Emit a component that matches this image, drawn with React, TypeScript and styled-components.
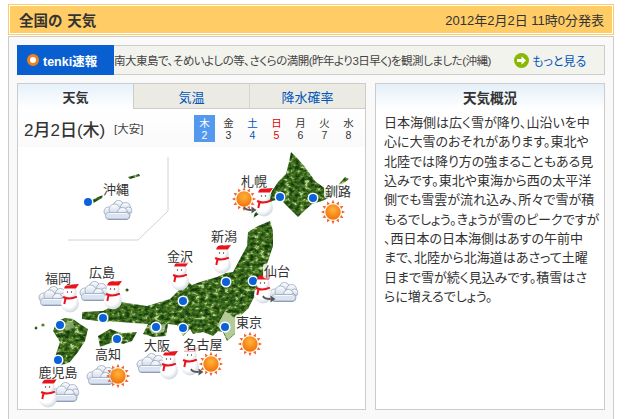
import styled, { createGlobalStyle } from 'styled-components';

const GlobalStyle = createGlobalStyle`
  html, body {
    margin: 0;
    padding: 0;
    height: 419px;
    overflow: hidden;
    background: #fff;
    font-family: "Liberation Sans", "Noto Sans CJK JP", sans-serif;
    font-feature-settings: "palt";
    color: #333;
  }
`;

const Page = styled.div`
  width: 606px;
  padding: 4px 0 0 8px;
`;

const TitleBar = styled.header`
  box-sizing: border-box;
  height: 31px;
  margin-bottom: 1px;
  padding: 0 9px 0 10px;
  display: flex;
  align-items: center;
  justify-content: space-between;
  background: #ffcc66;
  border: 1px solid #ffcc66;
  box-shadow: inset 0 0 0 1px #fff;
`;

const Title = styled.h1`
  margin: 0;
  font-size: 14.5px;
  font-weight: 700;
  color: #333;
  word-spacing: 1px;
`;

const Published = styled.span`
  font-size: 13px;
  color: #333;
`;

const Shell = styled.main`
  box-sizing: border-box;
  height: 400px;
  padding: 8px;
  background: #f9f9f9;
  border: 1px solid #ccc;
`;

const NewsBar = styled.section`
  box-sizing: border-box;
  height: 30px;
  margin-bottom: 8px;
  display: flex;
  align-items: center;
  background: #f3f3ee;
  border: 1px solid #ccc;
  font-size: 12px;
`;

const NewsTag = styled.div`
  box-sizing: border-box;
  width: 97px;
  height: 30px;
  margin: -1px 0 -1px -1px;
  padding-left: 10px;
  display: flex;
  align-items: center;
  gap: 4px;
  background: #0a5fd0;
  color: #fff;
  font-size: 12.5px;
  font-weight: 700;
  flex: none;
`;

const Ring = styled.span`
  box-sizing: border-box;
  width: 12px;
  height: 12px;
  border: 3.5px solid #f08020;
  border-radius: 50%;
  background: #fff;
`;

const NewsText = styled.span`
  width: 399px;
  flex: none;
  white-space: nowrap;
  color: #444;
  font-size: 11.5px;
  letter-spacing: -0.5px;
`;

const MoreLink = styled.a`
  display: flex;
  align-items: center;
  gap: 3px;
  margin-left: 1px;
  color: #0055bb;
  font-size: 12px;
  white-space: nowrap;
`;

const Columns = styled.div`
  display: grid;
  grid-template-columns: 349px 230px;
  gap: 9px;
`;

const Panel = styled.section`
  box-sizing: border-box;
  height: 327px;
  background: #fff;
  border: 1px solid #ccc;
  display: flex;
  flex-direction: column;
`;

const Tabs = styled.nav`
  display: grid;
  grid-template-columns: 116px 116px 115px;
  height: 25px;
  flex: none;
`;

const Tab = styled.div<{ $active?: boolean }>`
  box-sizing: border-box;
  display: flex;
  align-items: center;
  justify-content: center;
  font-size: 13px;
  font-weight: ${(p) => (p.$active ? 700 : 400)};
  color: ${(p) => (p.$active ? '#333' : '#0055bb')};
  background: ${(p) => (p.$active ? 'linear-gradient(#e6f1fa, #fff)' : '#ebebe3')};
  border-right: ${(p) => (p.$active ? '1px solid #ccc' : '1px solid #d6d6ce')};
  border-bottom: ${(p) => (p.$active ? '0' : '1px solid #ccc')};
  &:last-child {
    border-right: 0;
  }
`;

const DateRow = styled.div`
  height: 38px;
  flex: none;
  display: flex;
  align-items: center;
  padding-left: 6px;
  background: linear-gradient(#fff, #fafafa);
`;

const DateText = styled.div`
  font-size: 17px;
  font-weight: 500;
  color: #333;
  white-space: nowrap;
  width: 90px;
`;

const Rokuyo = styled.div`
  font-size: 11.5px;
  color: #444;
  width: 80px;
  white-space: nowrap;
`;

const Week = styled.div`
  display: flex;
  gap: 3px;
`;

const Day = styled.div<{ $color: string; $active?: boolean }>`
  box-sizing: border-box;
  width: 21px;
  height: 27px;
  padding-top: 2px;
  display: flex;
  flex-direction: column;
  align-items: center;
  font-size: 10.5px;
  line-height: 12px;
  color: ${(p) => (p.$active ? '#fff' : p.$color)};
  background: ${(p) => (p.$active ? '#5599ee' : 'transparent')};
`;

const MapCanvas = styled.div`
  position: relative;
  flex: 1;
  overflow: hidden;
`;

const MapSvg = styled.svg`
  display: block;
`;

const Spot = styled.div<{ $x: number; $y: number }>`
  position: absolute;
  left: ${(p) => p.$x - 18}px;
  top: ${(p) => p.$y - 148}px;
  transform: translate(-50%, -50%);
  line-height: 0;
`;

const Pin = styled(Spot)`
  box-sizing: border-box;
  width: 8px;
  height: 8px;
  background: #0a62d8;
  border-radius: 50%;
  box-shadow: 0 0 0 1.5px #fff;
`;

const CityLabel = styled(Spot)`
  font-size: 13px;
  line-height: 15px;
  color: #333;
  white-space: nowrap;
  background: rgba(255, 255, 255, 0.85);
  border-radius: 3px;
  padding: 0 1px;
`;

const SummaryHead = styled.h2`
  margin: 0;
  height: 25px;
  flex: none;
  display: flex;
  align-items: center;
  justify-content: center;
  font-size: 13.5px;
  font-weight: 700;
  color: #333;
  background: linear-gradient(#e4eff8, #fff);
`;

const SummaryBody = styled.div`
  padding: 4px 0 0 8px;
  font-size: 13px;
  line-height: 19.35px;
  color: #333;
  white-space: nowrap;
`;

const SummaryLine = styled.div``;

const Sun = () => {
  const rays = Array.from({ length: 12 }, (_, i) => i * 30);
  return (
    <svg width="25" height="25" viewBox="-14 -14 28 28">
      {rays.map((r) => (
        <polygon key={r} points="-1.7,-9.8 1.7,-9.8 0,-13.6" fill="#f2602a" transform={`rotate(${r})`} />
      ))}
      <circle r="8.6" fill="url(#sunFill)" />
    </svg>
  );
};

const Cloud = () => (
  <svg width="31" height="23" viewBox="0 0 31 23">
    <g fill="url(#cloudFill)" stroke="#8d9bb0" strokeWidth="0.7">
      <circle cx="17" cy="6" r="5" />
      <circle cx="24" cy="8" r="5" />
      <circle cx="27" cy="11" r="3.5" />
      <circle cx="7" cy="12" r="4.5" />
      <circle cx="13" cy="10" r="5.5" />
      <circle cx="21" cy="13" r="5" />
      <circle cx="25" cy="16" r="3.6" />
      <rect x="4" y="13" width="24" height="7" rx="3.4" />
    </g>
    <path d="M5 14.5h21v4.6H6z" fill="#d9e3f1" />
    <path d="M6 19.7h20" stroke="#7d8ca3" strokeWidth="0.8" />
  </svg>
);

const Snowman = () => (
  <svg width="21" height="30" viewBox="0 0 21 30">
    <circle cx="10.5" cy="20.5" r="9" fill="url(#snowFill)" />
    <circle cx="10.5" cy="9.5" r="6.6" fill="url(#snowFill)" />
    <path d="M4.6 5.6 C5 1.6 9 0.4 12.4 1.6 L19.5 1 L17.4 4 L16.4 5.6 Z" fill="#e8141c" />
    <circle cx="8" cy="9" r="0.7" fill="#333" />
    <circle cx="12" cy="9" r="0.7" fill="#333" />
    <path d="M3.6 14 C7.4 16 12.6 15.8 17.4 13.6 M6 15.2 L4.8 21" stroke="#e8141c" strokeWidth="2" fill="none" />
  </svg>
);

const Arrow = () => (
  <svg width="13" height="8" viewBox="0 0 13 8">
    <path d="M0 1 C2 4 5 4 8 4" stroke="#555" strokeWidth="2" fill="none" />
    <path d="M8 0.6 L13 4 L8 7.4 Z" fill="#555" />
  </svg>
);

const days = [
  { w: '木', d: 2, color: '#333', active: true },
  { w: '金', d: 3, color: '#333' },
  { w: '土', d: 4, color: '#0055bb' },
  { w: '日', d: 5, color: '#e00000' },
  { w: '月', d: 6, color: '#333' },
  { w: '火', d: 7, color: '#333' },
  { w: '水', d: 8, color: '#333' },
];

const pins = [
  [88, 203], [280, 198], [313, 199], [226, 283], [253, 282], [225, 328], [183, 302],
  [183, 329], [156, 328], [103, 319], [117, 340], [60, 326], [58, 361],
];

const labels: [string, number, number][] = [
  ['沖縄', 116, 190], ['札幌', 254, 182], ['釧路', 338, 192], ['新潟', 224, 237],
  ['仙台', 277, 272], ['金沢', 180, 257], ['広島', 102, 273], ['福岡', 58, 279],
  ['東京', 249, 323], ['名古屋', 203, 345], ['大阪', 157, 346], ['高知', 108, 355],
  ['鹿児島', 58, 373],
];

const clouds = [[117, 212], [283, 294], [93, 293], [52, 298], [150, 365], [100, 377], [64, 394]];
const suns = [[244, 200], [333, 213], [250, 345], [211, 365], [118, 377]];
const snowmen = [
  [264, 203], [222, 260], [263, 290], [180, 277], [113, 296], [70, 299], [190, 362], [169, 366], [48, 394],
];
const arrows = [[250, 211], [269, 300], [197, 373]];

const summary = [
  '日本海側は広く雪が降り、山沿いを中',
  '心に大雪のおそれがあります。東北や',
  '北陸では降り方の強まることもある見',
  '込みです。東北や東海から西の太平洋',
  '側でも雪雲が流れ込み、所々で雪が積',
  'もるでしょう。きょうが雪のピークですが',
  '、西日本の日本海側はあすの午前中',
  'まで、北陸から北海道はあさって土曜',
  '日まで雪が続く見込みです。積雪はさ',
  'らに増えるでしょう。',
];

const JapanMap = () => (
  <MapSvg width="347" height="260" viewBox="18 148 347 260">
    <defs>
      <radialGradient id="sunFill" cx="50%" cy="35%" r="65%">
        <stop offset="0" stopColor="#ffb43c" />
        <stop offset="1" stopColor="#f27208" />
      </radialGradient>
      <linearGradient id="cloudFill" x1="0" y1="0" x2="0" y2="1">
        <stop offset="0" stopColor="#ffffff" />
        <stop offset="1" stopColor="#c4d2e6" />
      </linearGradient>
      <radialGradient id="snowFill" cx="40%" cy="35%" r="70%">
        <stop offset="0.55" stopColor="#ffffff" />
        <stop offset="1" stopColor="#c9d2dc" />
      </radialGradient>
      <filter id="terrain" x="0" y="0" width="100%" height="100%" colorInterpolationFilters="sRGB">
        <feGaussianBlur in="SourceAlpha" stdDeviation="0.5" result="coast" />
        <feTurbulence type="fractalNoise" baseFrequency="0.2 0.28" numOctaves="3" seed="7" />
        <feColorMatrix values="0 2 0 0 -0.5  0 2 0 0 -0.5  0 2 0 0 -0.5  0 0 0 0 1" />
        <feComponentTransfer>
          <feFuncR type="table" tableValues="0.08 0.14 0.24 0.36 0.72" />
          <feFuncG type="table" tableValues="0.22 0.31 0.42 0.53 0.82" />
          <feFuncB type="table" tableValues="0.05 0.08 0.12 0.18 0.58" />
        </feComponentTransfer>
        <feComposite in2="coast" operator="in" />
      </filter>
    </defs>
    <path d="M168 158 V212 L138 241 H68" fill="none" stroke="#d2d2d2" strokeWidth="1" />
    <g filter="url(#terrain)" fill="#000">
      {/* Okinawa */}
      <path d="M85 205 L96 199 L103 196 L102 199 L92 205 L86 207 Z" />
      <path d="M128 178 L139 175 L140 177 L130 180 Z" />
      {/* Hokkaido */}
      <path d="M291 153 L298 160 L305 168 L315 182 L327 191 L337 187 L345 178 L349 180 L340 187 L333 197 L322 202 L312 205 L303 213 L298 218 L290 210 L280 200 L272 202 L262 213 L253 219 L255 214 L266 207 L272 192 L278 183 L286 175 L289 163 Z" />
      {/* Honshu */}
      <path d="M258 227 L270 222 L273 232 L273 247 L268 262 L262 280 L260 290 L253 300 L248 310 L240 317 L235 322 L235 335 L227 342 L223 333 L218 332 L213 337 L203 333 L193 335 L190 330 L183 337 L177 326 L168 325 L166 337 L153 338 L143 335 L148 325 L120 323 L97 322 L82 320 L82 313 L103 312 L120 303 L147 307 L170 300 L180 290 L186 281 L192 286 L200 283 L217 278 L226 274 L233 273 L241 258 L247 247 L248 233 Z" />
      <path d="M216 281 L222 276 L218 284 Z" />
      {/* Shikoku */}
      <path d="M98 337 L110 330 L122 334 L137 333 L132 342 L123 345 L116 342 L100 348 Z" />
      {/* Kyushu */}
      <path d="M57 322 L65 319 L73 320 L80 325 L88 330 L85 342 L78 353 L70 363 L60 367 L55 358 L60 343 L53 332 Z" />
      <circle cx="36" cy="329" r="1.4" />
      <circle cx="43" cy="326" r="1.6" />
      <circle cx="127" cy="291" r="1.6" />
    </g>
    {/* Kanto plain and Kyushu highlights */}
    <path d="M217 327 L225 312 L236 320 L235 334 L228 341 L223 332 Z" fill="#b4cb98" />
    <path d="M62 324 L72 322 L75 328 L66 332 Z" fill="#a8c48c" opacity="0.7" />
    <path d="M148 326 L166 325 L164 333 L152 335 Z" fill="#c0d4ac" opacity="0.75" />
  </MapSvg>
);

const App = () => (
  <Page>
    <GlobalStyle />
    <TitleBar>
      <Title>全国の 天気</Title>
      <Published>2012年2月2日 11時0分発表</Published>
    </TitleBar>
    <Shell>
      <NewsBar>
        <NewsTag>
          <Ring />
          tenki速報
        </NewsTag>
        <NewsText>南大東島で、そめいよしの等、さくらの満開(昨年より3日早く)を観測しました(沖縄)</NewsText>
        <MoreLink>
          <svg width="15" height="15" viewBox="0 0 15 15">
            <circle cx="7.5" cy="7.5" r="7.5" fill="#88b800" />
            <path d="M3 6h4.5V3.2L12 7.5l-4.5 4.3V9H3z" fill="#fff" />
          </svg>
          もっと見る
        </MoreLink>
      </NewsBar>
      <Columns>
        <Panel>
          <Tabs>
            <Tab $active>天気</Tab>
            <Tab>気温</Tab>
            <Tab>降水確率</Tab>
          </Tabs>
          <DateRow>
            <DateText>2月2日(木)</DateText>
            <Rokuyo>[大安]</Rokuyo>
            <Week>
              {days.map((day) => (
                <Day key={day.d} $color={day.color} $active={day.active}>
                  <span>{day.w}</span>
                  <span>{day.d}</span>
                </Day>
              ))}
            </Week>
          </DateRow>
          <MapCanvas>
            <JapanMap />
            {pins.map(([x, y]) => (
              <Pin key={`${x}-${y}`} $x={x} $y={y} />
            ))}
            {clouds.map(([x, y]) => (
              <Spot key={`${x}-${y}`} $x={x} $y={y}>
                <Cloud />
              </Spot>
            ))}
            {suns.map(([x, y]) => (
              <Spot key={`${x}-${y}`} $x={x} $y={y}>
                <Sun />
              </Spot>
            ))}
            {snowmen.map(([x, y]) => (
              <Spot key={`${x}-${y}`} $x={x} $y={y}>
                <Snowman />
              </Spot>
            ))}
            {arrows.map(([x, y]) => (
              <Spot key={`${x}-${y}`} $x={x} $y={y}>
                <Arrow />
              </Spot>
            ))}
            {labels.map(([name, x, y]) => (
              <CityLabel key={name} $x={x} $y={y}>
                {name}
              </CityLabel>
            ))}
          </MapCanvas>
        </Panel>
        <Panel>
          <SummaryHead>天気概況</SummaryHead>
          <SummaryBody>
            {summary.map((line) => (
              <SummaryLine key={line}>{line}</SummaryLine>
            ))}
          </SummaryBody>
        </Panel>
      </Columns>
    </Shell>
  </Page>
);

export default App;
